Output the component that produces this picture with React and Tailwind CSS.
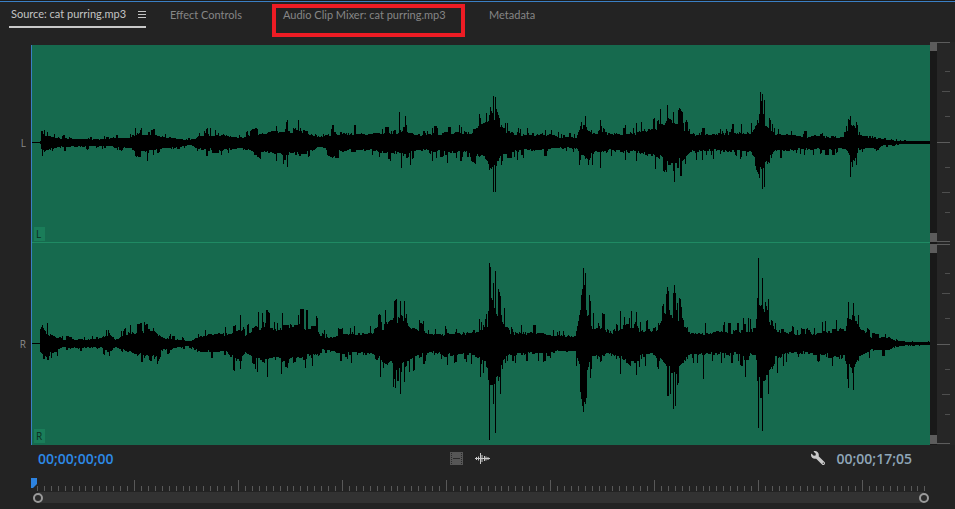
import { FaWrench } from "react-icons/fa"

// [x, up, down] peaks in page coordinates, read off the reference
const leftEnv = [
  [40, 1, 1], [41, 11, 10], [46, 10, 12], [60, 5, 6], [100, 4, 4], [130, 8, 8], [136, 11, 11], [150, 10, 13], [160, 8, 8],
  [190, 3, 3], [200, 9, 9], [220, 11, 10], [240, 6, 8], [250, 9, 10], [270, 15, 14], [285, 16, 17], [300, 17, 16],
  [320, 7, 6], [335, 13, 12], [370, 11, 10], [400, 15, 16], [420, 11, 10], [450, 13, 13], [470, 14, 14], [486, 26, 22],
  [491, 38, 42], [496, 30, 30], [502, 15, 14], [520, 11, 11], [550, 11, 10], [560, 6, 6], [576, 7, 8], [580, 20, 14],
  [585, 23, 26], [595, 11, 13], [600, 15, 13], [610, 11, 11], [640, 14, 14], [660, 22, 20], [668, 30, 28], [680, 23, 26],
  [690, 11, 12], [720, 13, 11], [750, 13, 13], [757, 30, 24], [762, 40, 42], [766, 25, 30], [775, 11, 12], [800, 8, 9],
  [820, 8, 9], [845, 7, 8], [848, 22, 18], [852, 25, 30], [858, 10, 9], [880, 5, 5], [895, 2, 2], [910, 1, 1], [930, 1, 1],
]
const leftSpikes = [
  [399, 30, 0], [401, 0, 25], [405, 26, 0], [410, 0, 22], [432, 14, 18], [447, 0, 20], [479, 28, 0], [493, 46, 49],
  [495, 45, 49], [579, 0, 22], [600, 22, 25], [660, 33, 0], [667, 37, 0], [673, 30, 28], [760, 38, 0], [762, 48, 46],
  [764, 42, 44], [850, 26, 34], [287, 20, 24], [276, 16, 18], [636, 19, 18],
]
const rightEnv = [
  [38, 2, 2], [40, 14, 15], [43, 20, 20], [48, 14, 16], [56, 8, 10], [62, 5, 6], [100, 6, 5], [108, 13, 11], [115, 5, 5],
  [130, 14, 11], [137, 17, 15], [152, 20, 22], [160, 8, 9], [190, 3, 3], [200, 10, 10], [225, 13, 11], [240, 20, 25],
  [245, 13, 12], [265, 28, 25], [275, 19, 20], [290, 27, 25], [300, 24, 20], [315, 23, 16], [320, 10, 8], [330, 8, 8],
  [340, 13, 13], [370, 15, 14], [380, 21, 23], [400, 38, 36], [410, 25, 22], [430, 11, 12], [450, 14, 17], [470, 14, 15],
  [487, 25, 30], [489, 78, 60], [493, 64, 60], [498, 40, 52], [503, 30, 28], [510, 15, 15], [540, 14, 13], [550, 10, 11],
  [575, 10, 10], [578, 29, 26], [583, 62, 50], [586, 45, 38], [592, 22, 20], [600, 25, 18], [610, 15, 15], [636, 28, 30],
  [640, 17, 18], [655, 19, 16], [665, 40, 34], [667, 44, 40], [673, 44, 40], [680, 38, 32], [690, 12, 14], [705, 15, 15],
  [720, 15, 13], [750, 18, 16], [755, 20, 20], [757, 37, 28], [758, 70, 54], [762, 62, 50], [768, 36, 44], [775, 20, 22],
  [790, 15, 12], [803, 12, 13], [820, 15, 15], [845, 20, 20], [848, 40, 32], [852, 38, 40], [856, 30, 24], [860, 20, 18],
  [870, 9, 9], [890, 8, 8], [895, 3, 3], [905, 2, 2], [930, 1, 1],
]
const rightSpikes = [
  [400, 42, 38], [404, 42, 38], [489, 80, 96], [495, 72, 89], [493, 60, 60], [500, 42, 50], [583, 75, 68], [585, 70, 60],
  [667, 56, 48], [673, 50, 65], [675, 50, 62], [757, 45, 0], [758, 85, 84], [762, 65, 87], [768, 44, 50], [848, 41, 44],
  [853, 40, 46], [267, 33, 33], [240, 28, 25], [298, 28, 0], [316, 27, 0], [636, 31, 31], [620, 32, 30], [380, 28, 33],
  [703, 0, 35], [745, 0, 33],
]

function interp(env, x, i) {
  let a = env[0]
  for (const p of env) {
    if (p[0] <= x) a = p
    else {
      const t = (x - a[0]) / (p[0] - a[0])
      return a[i] + (p[i] - a[i]) * t
    }
  }
  return a[i]
}

function wavePath(env, spikes, cy, seed) {
  let s = seed
  const rnd = () => {
    s = (s * 1664525 + 1013904223) % 4294967296
    return s / 4294967296
  }
  const shape = () => {
    const r = rnd()
    if (r > 0.8) return 0.95 + rnd() * 0.5
    return 0.55 + rnd() * 0.28
  }
  let d = `M32 ${cy}H930`
  let upK = 1
  let downK = 1
  for (let x = 40; x < 930; x++) {
    // hold a value for a column or two so the edge comes out blocky
    if (rnd() > 0.35) upK = shape()
    if (rnd() > 0.35) downK = shape()
    const up = Math.round(interp(env, x, 1) * upK)
    const down = Math.round(interp(env, x, 2) * downK)
    if (up + down > 0) d += `M${x + 0.5} ${cy - up}V${cy + down + 1}`
  }
  for (const [x, up, down] of spikes) {
    d += `M${x + 0.5} ${cy - up}V${cy + down + 1}`
  }
  return d
}

function Channel({ label, viewBox, path, boxClass, chipClass }) {
  return (
    <div className={`relative ${boxClass}`}>
      <svg className="block w-full h-full" viewBox={viewBox} shapeRendering="crispEdges">
        <path d={path} stroke="#000" strokeWidth="1" fill="none" />
      </svg>
      <span className={`absolute left-[2px] w-[11px] h-[14px] bg-[#1a7d59] text-[#0b2c20] text-[10px] leading-[14px] pl-[2px] ${chipClass}`}>{label}</span>
    </div>
  )
}

function SideRuler() {
  const long = (y) => <rect key={y} x="0" y={y} width="13" height="1" fill="#5c5c5c" />
  const mid = (y) => <rect key={y} x="5" y={y} width="8" height="1" fill="#4e4e4e" />
  const short = (y) => <rect key={y} x="8" y={y} width="5" height="1" fill="#4e4e4e" />
  return (
    <svg className="block w-[18px] h-[403px] bg-[#262626]" viewBox="0 42 18 403" shapeRendering="crispEdges">
      {[42, 142, 241, 244, 344, 443].map(long)}
      {[91, 192, 293, 394].map(mid)}
      {[71, 116, 167, 212, 273, 318, 369, 414].map(short)}
    </svg>
  )
}

function Timeline() {
  const ticks = []
  for (let i = -15; i <= 114; i++) {
    const x = Math.round(134 + i * (104 / 15))
    if (x < 37 || x > 924) continue
    const major = i % 15 === 0
    ticks.push(<rect key={i} x={x} y={major ? 480 : 486} width="1" height={major ? 11 : 5} fill="#595959" />)
  }
  return (
    <svg className="block ml-[31px] w-[895px] h-[14px]" viewBox="31 478 895 14" shapeRendering="crispEdges">
      {ticks}
      <polygon points="31,478 37,478 37,484 33,488 31,488" fill="#2d83e0" shapeRendering="auto" />
    </svg>
  )
}

export default function App() {
  return (
    <div className="w-[955px] h-[509px] overflow-hidden flex flex-col bg-[#232323] font-['Lato',sans-serif] text-[11px]">
      <div className="h-px bg-[#1c1c1c]" />
      <div className="h-px bg-[#3a7fc4]" />

      <div className="h-[40px] flex items-start shrink-0 text-[#868686] whitespace-nowrap leading-[14px]">
        <div className="ml-[9px] w-[137px] h-[26px] border-b-2 border-[#c9c9c9] flex items-center justify-between pl-[2px] text-[#c4c4c4]">
          <span>Source: cat purring.mp3</span>
          <div className="w-[8px] flex flex-col gap-[2px]">
            <div className="h-px bg-[#c4c4c4]" />
            <div className="h-px bg-[#c4c4c4]" />
            <div className="h-px bg-[#c4c4c4]" />
          </div>
        </div>
        <div className="ml-[24px] w-[102px] h-[26px] flex items-center">Effect Controls</div>
        <div className="mt-[2px] w-[193px] h-[33px] border-4 border-[#ed1c24] pl-[7px]">Audio Clip Mixer: cat purring.mp3</div>
        <div className="ml-[24px] h-[26px] flex items-center">Metadata</div>
      </div>

      <div className="h-[403px] flex shrink-0">
        <div className="w-[31px] pt-[3px] flex flex-col text-[#8a8a8a] text-[10px] font-['Open_Sans',sans-serif]">
          <div className="h-[197px] flex items-center justify-end pr-[5px]">L</div>
          <div className="h-[203px] pt-[2px] flex items-center justify-end pr-[5px]">R</div>
        </div>
        <div className="w-[899px] mt-[3px] flex flex-col bg-[#166a4e] border-l border-[#3a7fc4] font-['Open_Sans',sans-serif]">
          <Channel label="L" viewBox="32 45 898 197" boxClass="h-[197px]" chipClass="bottom-[1px]" path={wavePath(leftEnv, leftSpikes, 142, 7)} />
          <div className="h-px bg-[#1f8a63]" />
          <Channel label="R" viewBox="32 243 898 202" boxClass="h-[202px]" chipClass="bottom-[2px]" path={wavePath(rightEnv, rightSpikes, 343, 91)} />
        </div>
        <div className="w-[7px] flex flex-col bg-[#191919]">
          <div className="w-[8px] h-[9px] bg-[#5c5c5c]" />
          <div className="flex-1" />
          <div className="w-[8px] h-[9px] bg-[#5c5c5c]" />
          <div className="h-[2px]" />
          <div className="w-[8px] h-[9px] bg-[#5c5c5c]" />
          <div className="flex-1" />
          <div className="w-[8px] h-[9px] bg-[#5c5c5c]" />
          <div className="h-px" />
        </div>
        <SideRuler />
      </div>

      <div className="h-[26px] flex items-center pl-[38px] pr-[43px] shrink-0 text-[14px] font-['Open_Sans',sans-serif]">
        <span className="w-[412px] text-[#2d8ae6] font-semibold">00;00;00;00</span>
        <svg className="w-[13px] h-[13px]" viewBox="0 0 13 13" shapeRendering="crispEdges">
          <rect width="13" height="13" fill="#565656" />
          <path d="M1.5 1V12M11.5 1V12" stroke="#2a2a2a" strokeDasharray="1 1" fill="none" />
          <rect x="3" y="6" width="7" height="1" fill="#2a2a2a" />
        </svg>
        <svg className="ml-[12px] w-[15px] h-[11px]" viewBox="0 0 15 11">
          <path d="M0 5.5H15M1.5 4V7M3.5 3.5V7.5M5.5 0V11M7 2V9M9.5 3V8M11 3.5V7.5M13 4V7" stroke="#c8c8c8" strokeWidth="1" fill="none" />
        </svg>
        <div className="flex-1" />
        <FaWrench className="w-[14px] h-[14px] text-[#c9c9c9] -scale-x-100" />
        <span className="ml-[11px] text-[#8fa6b8] font-semibold">00;00;17;05</span>
      </div>

      <div className="h-[7px] shrink-0" />
      <Timeline />
      <div className="relative ml-[38px] w-[886px] h-[11px] bg-[#323232]">
        <div className="absolute left-[-5px] top-[1px] w-[10px] h-[10px] rounded-full border-2 border-[#9a9a9a] bg-[#2a2a2a]" />
        <div className="absolute right-[-5px] top-[1px] w-[10px] h-[10px] rounded-full border-2 border-[#9a9a9a] bg-[#2a2a2a]" />
      </div>
    </div>
  )
}
